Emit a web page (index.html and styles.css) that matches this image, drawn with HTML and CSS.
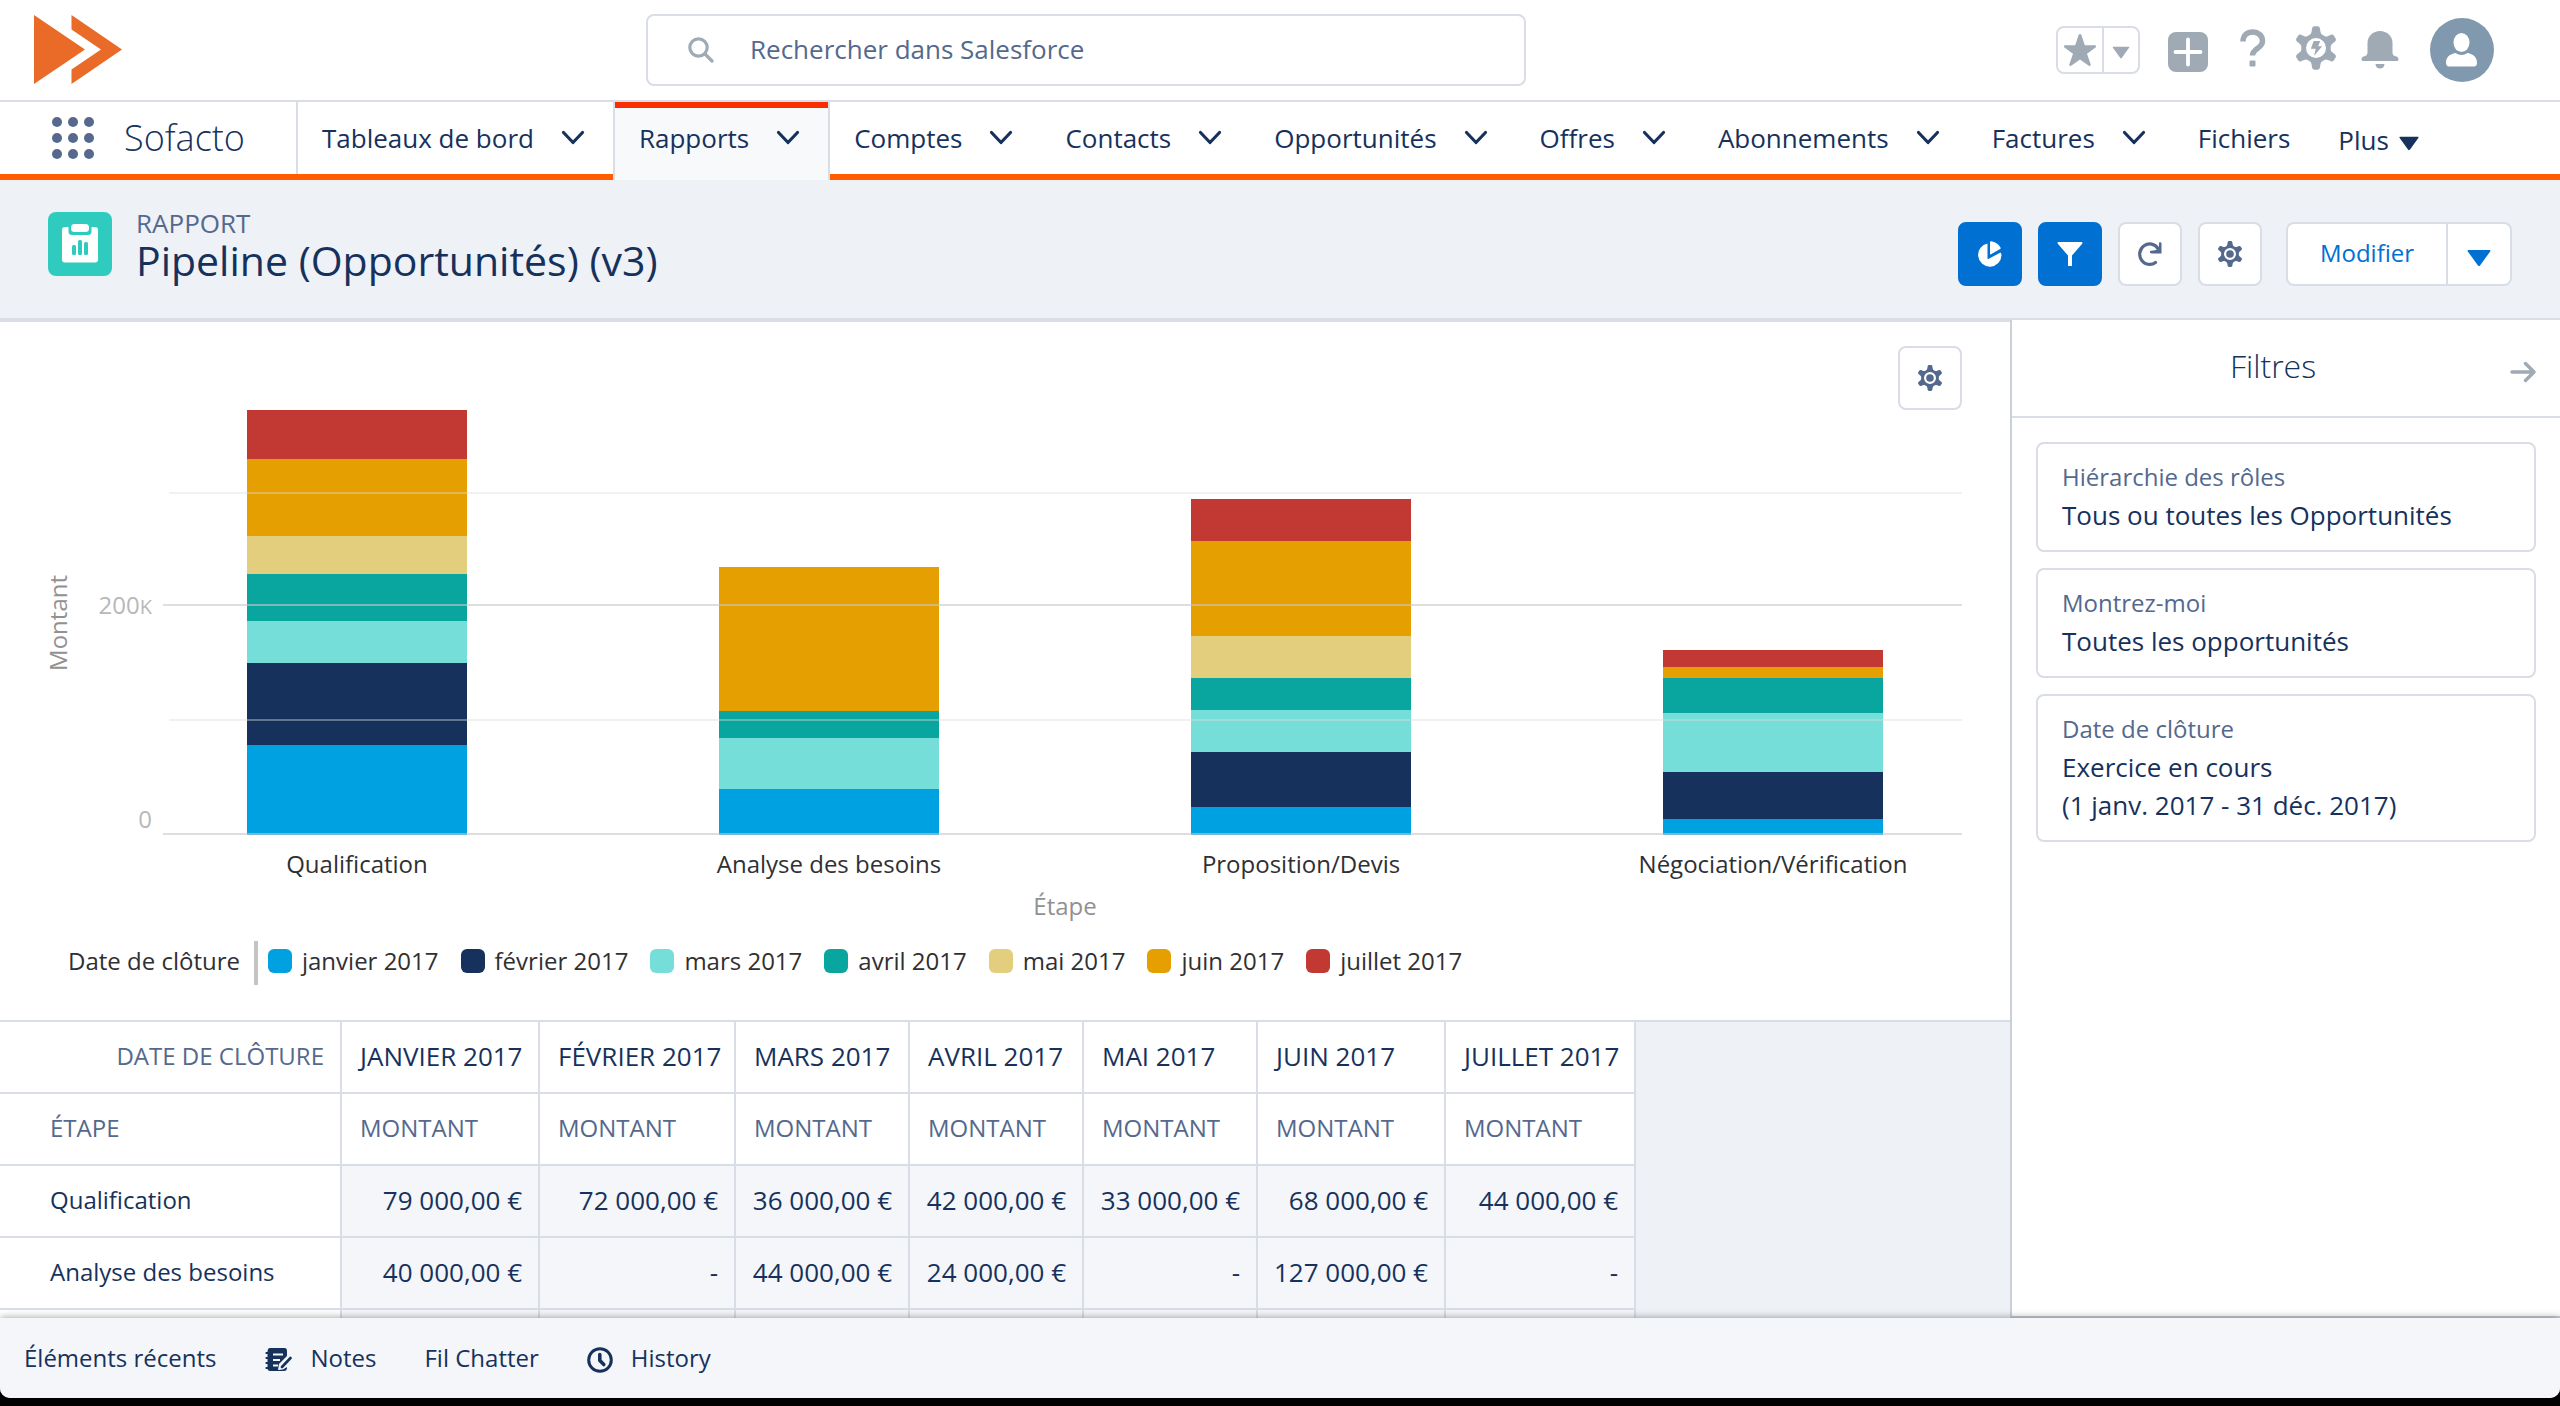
FILE: index.html
```html
<!DOCTYPE html>
<html lang="fr">
<head>
<meta charset="utf-8">
<title>Pipeline (Opportunités) (v3)</title>
<link rel="stylesheet" href="styles.css">
</head>
<body>
<svg class="sprite" aria-hidden="true">
  <symbol id="chevron" viewBox="0 0 24 16"><path d="M2.500 2.500L12 12.500L21.500 2.500" fill="none" stroke="currentColor" stroke-width="3.200" stroke-linecap="round" stroke-linejoin="round"/></symbol>
  <symbol id="caret" viewBox="0 0 24 18"><path d="M1.500 1h21c1 0 1.200.8.700 1.500L13 16.500c-.6.700-1.400.7-2 0L.8 2.500C.3 1.800.5 1 1.500 1z" fill="currentColor"/></symbol>
  <symbol id="gear" viewBox="0 0 24 26"><g fill="currentColor"><circle cx="12" cy="13" r="8.800"/><g id="teeth"><path id="tooth" d="M8 5.500q1.200-.8 1.400-2.500l.2-1.600Q9.800 0 11 0h2q1.200 0 1.400 1.400l.2 1.600q.2 1.700 1.400 2.500z"/><use href="#tooth" transform="rotate(60 12 13)"/><use href="#tooth" transform="rotate(120 12 13)"/><use href="#tooth" transform="rotate(180 12 13)"/><use href="#tooth" transform="rotate(240 12 13)"/><use href="#tooth" transform="rotate(300 12 13)"/></g></g><circle cx="12" cy="13" r="4.900" fill="none" stroke="#fff" stroke-width="2.200"/></symbol>
</svg>

<div class="app">
  <header class="topbar">
    <a class="logo" href="#" aria-label="Accueil">
      <svg width="90" height="70" viewBox="0 0 90 70"><path d="M0 0L51 34.500L0 69zM37.500 0L88 34.500L37.500 69V54.500L67 34.500L37.500 14.500z" fill="#ea6a28"/></svg>
    </a>
    <label class="search">
      <svg width="26" height="26" viewBox="0 0 26 26" fill="none" stroke="#9faab5" stroke-width="3.200" stroke-linecap="round"><circle cx="10.500" cy="10.500" r="8.700"/><path d="M17 17l7 7"/></svg>
      <input type="search" placeholder="Rechercher dans Salesforce" aria-label="Rechercher dans Salesforce">
    </label>
    <div class="tools">
      <div class="favorites">
        <button class="fav-star" aria-label="Favoris"><svg width="32" height="32" viewBox="0 0 32 32" fill="currentColor"><path d="M14.600 1q1.400-2 2.800 0l3.400 10.300H31q1.800.6.500 2.300L23 19.800l3.800 10.900q-.5 1.800-2.300.9L16 25.400l-8.500 6.200q-1.800.9-2.300-.9L9 19.800.5 13.600Q-.8 11.900 1 11.300h10.200z"/></svg></button>
        <button class="fav-menu" aria-label="Liste des favoris"><svg width="18" height="13"><use href="#caret"/></svg></button>
      </div>
      <button class="tool tool-add" aria-label="Créer"><svg width="40" height="40" viewBox="0 0 40 40"><rect width="40" height="40" rx="8" fill="currentColor"/><path d="M20 7.500v25M7.500 20h25" stroke="#fff" stroke-width="3.800" stroke-linecap="round"/></svg></button>
      <button class="tool tool-help" aria-label="Aide"><svg width="26" height="38" viewBox="0 0 26 38"><path d="M3 12.500C3 6.500 7 3 12.700 3S22.500 7 22.500 12c0 7.500-10 7.500-10 14.500" fill="none" stroke="currentColor" stroke-width="5.500"/><rect x="9.500" y="31.500" width="6" height="6" rx="1" fill="currentColor"/></svg></button>
      <button class="tool tool-setup" aria-label="Configuration"><svg width="40" height="44" viewBox="0 0 24 26"><g fill="currentColor"><circle cx="12" cy="13" r="8.800"/><use href="#teeth"/></g><circle cx="12" cy="13" r="6" fill="#fff"/><path d="M10.600 8.800h3.900l-1.200 3.200h2.400l-4.800 5.600.9-4.100H8.900z" fill="currentColor"/></svg></button>
      <button class="tool tool-bell" aria-label="Notifications"><svg width="38" height="38" viewBox="0 0 38 38" fill="currentColor"><path d="M19 0c-7 0-12.500 5-12.500 12v9c0 3-1 3.800-4 4.500C0 26.200 0 30 2 30h34c2 0 2-3.800-.5-4.500-3-.7-4-1.500-4-4.500v-9C31.500 5 26 0 19 0zM14.500 33h9c0 6-9 6-9 0z"/></svg></button>
      <button class="avatar" aria-label="Profil"><svg width="34" height="34" viewBox="0 0 34 34" fill="#fff"><ellipse cx="16.500" cy="9.500" rx="8" ry="9.500"/><path d="M1 29.500c0-7 6.500-9 9.500-9.500 4 2.500 8 2.500 12 0 3 .5 9.500 2.500 9.500 9.500 0 2.500-1 4-3 4H4c-2 0-3-1.500-3-4z"/></svg></button>
    </div>
  </header>

  <nav class="navbar">
    <div class="brand">
      <button class="launcher" aria-label="Lanceur d'applications"><svg width="42" height="42" viewBox="0 0 42 42" fill="#54698d"><circle cx="5" cy="5" r="5"/><circle cx="21" cy="5" r="5"/><circle cx="37" cy="5" r="5"/><circle cx="5" cy="21" r="5"/><circle cx="21" cy="21" r="5"/><circle cx="37" cy="21" r="5"/><circle cx="5" cy="37" r="5"/><circle cx="21" cy="37" r="5"/><circle cx="37" cy="37" r="5"/></svg></button>
      <span class="app-name">Sofacto</span>
    </div>
    <ul class="tabs">
      <li class="tab"><a href="#">Tableaux de bord</a><button aria-label="Menu Tableaux de bord"><svg width="24" height="16"><use href="#chevron"/></svg></button></li>
      <li class="tab tab-active"><a href="#">Rapports</a><button aria-label="Menu Rapports"><svg width="24" height="16"><use href="#chevron"/></svg></button></li>
      <li class="tab"><a href="#">Comptes</a><button aria-label="Menu Comptes"><svg width="24" height="16"><use href="#chevron"/></svg></button></li>
      <li class="tab"><a href="#">Contacts</a><button aria-label="Menu Contacts"><svg width="24" height="16"><use href="#chevron"/></svg></button></li>
      <li class="tab"><a href="#">Opportunités</a><button aria-label="Menu Opportunités"><svg width="24" height="16"><use href="#chevron"/></svg></button></li>
      <li class="tab"><a href="#">Offres</a><button aria-label="Menu Offres"><svg width="24" height="16"><use href="#chevron"/></svg></button></li>
      <li class="tab"><a href="#">Abonnements</a><button aria-label="Menu Abonnements"><svg width="24" height="16"><use href="#chevron"/></svg></button></li>
      <li class="tab"><a href="#">Factures</a><button aria-label="Menu Factures"><svg width="24" height="16"><use href="#chevron"/></svg></button></li>
      <li class="tab"><a href="#">Fichiers</a></li>
      <li class="tab"><button class="more">Plus <svg width="20" height="15"><use href="#caret"/></svg></button></li>
    </ul>
  </nav>

  <header class="page-header">
    <div class="page-icon"><svg width="36" height="40" viewBox="0 0 36 40"><rect x="9" y="0" width="18" height="8" rx="3.500" fill="#fff"/><path d="M3 3h3.500v4.500a3.500 3.500 0 0 0 3.500 3.500h16a3.500 3.500 0 0 0 3.500-3.500V3H33a3 3 0 0 1 3 3v29.500a3 3 0 0 1-3 3H3a3 3 0 0 1-3-3V6a3 3 0 0 1 3-3z" fill="#fff"/><g fill="#2fcbbf"><rect x="10" y="21" width="4" height="10" rx="1.500"/><rect x="16" y="16" width="4" height="15" rx="1.500"/><rect x="22" y="18" width="4" height="13" rx="1.500"/></g></svg></div>
    <div class="page-heading">
      <p>RAPPORT</p>
      <h1>Pipeline (Opportunités) (v3)</h1>
    </div>
    <div class="actions">
      <button class="icon-button icon-button-brand" aria-label="Graphique"><svg width="24" height="26" viewBox="0 0 24 26" fill="#fff"><path d="M9.500 2.500V17q0 1.500 1.300.8L22.500 11.500q1 .8 1 3A11.700 11.700 0 1 1 9.500 2.500z"/><path d="M12 1.200q0-1.200 1.200-1 6 .8 9.300 6.300.6 1-.4 1.600L13 13.300q-1 .4-1-.6z"/></svg></button>
      <button class="icon-button icon-button-brand" aria-label="Filtres"><svg width="26" height="26" viewBox="0 0 26 26" fill="#fff"><path d="M1.500 1h23c1 0 1.300.9.700 1.700L15 14.500V25h-4V14.500L.8 2.700C.2 1.900.5 1 1.500 1z"/></svg></button>
      <button class="icon-button" aria-label="Actualiser"><svg width="26" height="26" viewBox="0 0 26 26"><path d="M18.500 21.500A10 10.200 0 1 1 21 7.500" fill="none" stroke="currentColor" stroke-width="3.200" stroke-linecap="round"/><path d="M22 1.500q2.500-.8 2.500 1V12.500H14.500q-2-.3-1.700-2.500 5.500-.5 9.200-2z" fill="currentColor"/></svg></button>
      <button class="icon-button" aria-label="Options"><svg width="24" height="26"><use href="#gear"/></svg></button>
      <div class="split">
        <button class="split-main">Modifier</button>
        <button class="split-menu" aria-label="Autres actions"><svg width="24" height="18"><use href="#caret"/></svg></button>
      </div>
    </div>
  </header>

  <main class="workspace">
    <section class="report">
      <div class="chart">
        <div class="chart-tools"><button class="icon-button" aria-label="Propriétés du graphique"><svg width="24" height="26"><use href="#gear"/></svg></button></div>
        <div class="chart-grid">
          <div class="y-title">Montant</div>
          <div class="y-ticks"><span>200<small>K</small></span><span>0</span></div>
          <div class="plot">
            <div class="bars">
              <div class="bar"><i class="m7" style="height:49px"></i><i class="m6" style="height:77px"></i><i class="m5" style="height:38px"></i><i class="m4" style="height:47px"></i><i class="m3" style="height:42px"></i><i class="m2" style="height:82px"></i><i class="m1" style="height:90px"></i></div>
              <div class="bar"><i class="m6" style="height:144px"></i><i class="m4" style="height:27px"></i><i class="m3" style="height:51px"></i><i class="m1" style="height:46px"></i></div>
              <div class="bar"><i class="m7" style="height:42px"></i><i class="m6" style="height:95px"></i><i class="m5" style="height:42px"></i><i class="m4" style="height:32px"></i><i class="m3" style="height:42px"></i><i class="m2" style="height:55px"></i><i class="m1" style="height:28px"></i></div>
              <div class="bar"><i class="m7" style="height:17px"></i><i class="m6" style="height:11px"></i><i class="m4" style="height:35px"></i><i class="m3" style="height:59px"></i><i class="m2" style="height:47px"></i><i class="m1" style="height:16px"></i></div>
            </div>
            <div class="line line-minor" style="bottom:341px"></div>
            <div class="line" style="bottom:229px"></div>
            <div class="line line-minor" style="bottom:114px"></div>
            <div class="line" style="bottom:0"></div>
          </div>
          <div class="x-labels"><span>Qualification</span><span>Analyse des besoins</span><span>Proposition/Devis</span><span>Négociation/Vérification</span></div>
          <div class="x-title">Étape</div>
        </div>
        <div class="legend">
          <span class="legend-title">Date de clôture</span>
          <ul>
            <li><i class="m1"></i>janvier 2017</li>
            <li><i class="m2"></i>février 2017</li>
            <li><i class="m3"></i>mars 2017</li>
            <li><i class="m4"></i>avril 2017</li>
            <li><i class="m5"></i>mai 2017</li>
            <li><i class="m6"></i>juin 2017</li>
            <li><i class="m7"></i>juillet 2017</li>
          </ul>
        </div>
      </div>
      <div class="table-area">
        <table>
          <colgroup><col class="c-label"><col class="c-198"><col class="c-196"><col class="c-174"><col class="c-174"><col class="c-174"><col class="c-188"><col class="c-190"></colgroup>
          <thead>
            <tr class="months"><th class="group">DATE DE CLÔTURE</th><th>JANVIER 2017</th><th>FÉVRIER 2017</th><th>MARS 2017</th><th>AVRIL 2017</th><th>MAI 2017</th><th>JUIN 2017</th><th>JUILLET 2017</th></tr>
            <tr class="sub"><th>ÉTAPE</th><th>MONTANT</th><th>MONTANT</th><th>MONTANT</th><th>MONTANT</th><th>MONTANT</th><th>MONTANT</th><th>MONTANT</th></tr>
          </thead>
          <tbody>
            <tr><th scope="row">Qualification</th><td>79 000,00 €</td><td>72 000,00 €</td><td>36 000,00 €</td><td>42 000,00 €</td><td>33 000,00 €</td><td>68 000,00 €</td><td>44 000,00 €</td></tr>
            <tr><th scope="row">Analyse des besoins</th><td>40 000,00 €</td><td>-</td><td>44 000,00 €</td><td>24 000,00 €</td><td>-</td><td>127 000,00 €</td><td>-</td></tr>
            <tr><th scope="row"></th><td></td><td></td><td></td><td></td><td></td><td></td><td></td></tr>
          </tbody>
        </table>
      </div>
    </section>

    <aside class="filters">
      <header>
        <h2>Filtres</h2>
        <button aria-label="Masquer les filtres"><svg width="26" height="22" viewBox="0 0 26 22" fill="none" stroke="#9faab5" stroke-width="3.400" stroke-linecap="round" stroke-linejoin="round"><path d="M2 11h21M15.500 2.500L24 11l-8.500 8.500"/></svg></button>
      </header>
      <div class="filter-list">
        <button class="filter"><span>Hiérarchie des rôles</span>Tous ou toutes les Opportunités</button>
        <button class="filter"><span>Montrez-moi</span>Toutes les opportunités</button>
        <button class="filter"><span>Date de clôture</span>Exercice en cours<br>(1 janv. 2017 - 31 déc. 2017)</button>
      </div>
    </aside>
  </main>

  <footer class="utility">
    <button>Éléments récents</button>
    <button><svg width="28" height="26" viewBox="0 0 28 26"><path d="M6 1h14.500Q23 1 23 4v5l-8 8-1 6 5-.5 4-2.500v1q0 3-3 3H6q-2 0-2.500-2H2q-1.500-1 0-2h1.500v-3H2q-1.500-1 0-2h1.500v-3H2q-1.500-1 0-2h1.500V7H2Q.5 6 2 5h1.500Q3.500 1 6 1z" fill="currentColor"/><path d="M9 7.500h10M9 13h7M9 18.500h5" stroke="#f4f6f9" stroke-width="2.200"/><path d="M18 20l8.500-9" stroke="currentColor" stroke-width="2.600" stroke-linecap="round"/></svg>Notes</button>
    <button>Fil Chatter</button>
    <button><svg width="26" height="26" viewBox="0 0 26 26" fill="none" stroke="currentColor" stroke-width="3" stroke-linecap="round" stroke-linejoin="round"><circle cx="13" cy="13" r="11.300"/><path d="M12.800 7.500v6l4 4" stroke-width="3.600"/></svg>History</button>
  </footer>
</div>
</body>
</html>
```
FILE: styles.css
```css
:root {
  --ink: #16325c;
  --muted: #54698d;
  --line: #d8dde6;
  --grey: #9faab5;
  --brand: #0070d2;
  --page: #eef1f6;
  --soft: #f4f6f9;
}

* { box-sizing: border-box; }

body {
  margin: 0;
  padding-bottom: 8px;
  background: #000;
  color: var(--ink);
  font: 26px/38px "Open Sans", "Noto Sans", sans-serif;
}

button, input {
  margin: 0;
  padding: 0;
  border: 0;
  background: none;
  color: inherit;
  font: inherit;
}

svg { display: block; flex: none; }
a { color: inherit; text-decoration: none; }
ul { margin: 0; padding: 0; list-style: none; }
h1, h2, p { margin: 0; font-weight: 400; }
.sprite { position: absolute; width: 0; height: 0; }

.app {
  display: flex;
  flex-direction: column;
  height: calc(100vh - 8px);
  overflow: hidden;
  border-radius: 0 0 10px 10px;
  background: #fff;
}

/* Top bar */
.topbar {
  display: grid;
  grid-template-columns: 612px minmax(0, 880px) 1fr;
  align-items: center;
  padding: 14px 66px 14px 34px;
  border-bottom: 2px solid var(--line);
}

.search {
  display: flex;
  align-items: center;
  gap: 36px;
  height: 72px;
  padding: 0 40px;
  border: 2px solid var(--line);
  border-radius: 8px;
}

.search input { flex: 1; min-width: 0; padding-bottom: 3px; outline: none; }
.search input::placeholder { color: var(--muted); opacity: 1; }

.tools {
  display: flex;
  align-items: center;
  justify-content: flex-end;
  color: var(--grey);
}

.favorites {
  display: flex;
  height: 48px;
  border: 2px solid var(--line);
  border-radius: 8px;
}

.favorites button { display: flex; align-items: center; justify-content: center; }
.fav-star { width: 46px; border-right: 2px solid var(--line); }
.favorites .fav-menu { width: 34px; padding-top: 4px; }
.tool { margin-left: 28px; }
.tool-add { padding-top: 4px; }
.tool-help { margin-left: 32px; padding-bottom: 4px; }
.tool-setup { margin-left: 30px; padding-bottom: 4px; }
.tool-bell { margin-left: 25px; }

.avatar {
  display: flex;
  align-items: center;
  justify-content: center;
  width: 64px;
  height: 64px;
  margin: -8px 0 -8px 31px;
  border-radius: 50%;
  background: #8199af;
}

/* Navigation */
.navbar {
  display: flex;
  height: 78px;
  border-bottom: 6px solid #ff5d00;
}

.brand {
  display: flex;
  align-items: center;
  gap: 30px;
  width: 298px;
  padding-left: 52px;
  border-right: 2px solid var(--line);
}

.app-name { font-size: 36px; font-weight: 300; }
.tabs { display: flex; white-space: nowrap; }

.tab {
  display: flex;
  align-items: center;
  gap: 27px;
  padding: 0 24px;
}

.tab > button:not(.more) { padding-right: 4px; }

.tab-active {
  margin-bottom: -6px;
  padding-bottom: 6px;
  border: solid var(--line);
  border-width: 0 2px;
  background: #f7f9fb;
  box-shadow: inset 0 6px #fa2d00;
}

.more { display: flex; align-items: center; gap: 10px; padding-top: 4px; }
.more svg { margin-top: 6px; }

/* Page header */
.page-header {
  display: flex;
  align-items: center;
  gap: 24px;
  height: 140px;
  padding: 0 48px;
  border-bottom: 2px solid var(--line);
  background: var(--page);
}

.page-icon {
  display: flex;
  align-items: center;
  justify-content: center;
  width: 64px;
  height: 64px;
  margin-bottom: 10px;
  border-radius: 8px;
  background: #2fcbbf;
}

.page-heading { margin-bottom: 6px; }
.page-heading p { color: var(--muted); line-height: 28px; }
.page-heading h1 { font-size: 41px; line-height: 46px; }

.actions { display: flex; gap: 16px; margin: 10px 0 0 auto; }

.icon-button {
  display: flex;
  align-items: center;
  justify-content: center;
  width: 64px;
  height: 64px;
  border: 2px solid var(--line);
  border-radius: 8px;
  background: #fff;
  color: var(--muted);
}

.icon-button-brand { border-color: var(--brand); background: var(--brand); }

.split {
  display: flex;
  height: 64px;
  margin-left: 8px;
  border: 2px solid var(--line);
  border-radius: 8px;
  background: #fff;
  color: var(--brand);
}

.split-main { width: 160px; padding-bottom: 2px; font-size: 24px; border-right: 2px solid var(--line); }
.split-menu { display: flex; align-items: center; justify-content: center; width: 62px; padding-top: 8px; }

/* Workspace */
.workspace { display: flex; flex: 1; min-height: 0; }

.report {
  display: flex;
  flex: 1;
  flex-direction: column;
  min-width: 0;
  overflow: hidden;
  border-top: 2px solid var(--line);
}

.chart {
  padding: 24px 48px 35px;
  color: #2f3033;
  font-size: 24px;
  line-height: 32px;
}

.chart-tools { display: flex; justify-content: flex-end; }

.chart-grid {
  display: grid;
  grid-template-columns: 24px 80px 1fr;
  grid-template-rows: 425px auto auto;
}

.y-title {
  align-self: center;
  justify-self: start;
  color: #919191;
  line-height: 20px;
  writing-mode: vertical-rl;
  transform: rotate(180deg);
}

.y-ticks {
  display: flex;
  flex-direction: column;
  align-items: flex-end;
  justify-content: flex-end;
  gap: 180px;
  color: #b8b8b8;
}

.y-ticks small { font-size: 20px; }

.plot { position: relative; margin-left: 11px; }

.bars, .x-labels {
  display: flex;
  justify-content: space-between;
  height: 100%;
  padding: 0 79px 0 84px;
}

.bars { align-items: flex-end; }
.bar { width: 220px; }
.bar i { display: block; }

.line {
  position: absolute;
  right: 0;
  left: 0;
  height: 2px;
  background: rgba(200, 200, 200, 0.6);
}

.line-minor { left: 6px; background: rgba(220, 220, 220, 0.4); }

.x-labels { grid-column: 3; height: auto; margin: 13px 0 0 11px; }
.x-labels span { display: flex; justify-content: center; width: 220px; white-space: nowrap; }
.x-title { grid-column: 3; margin: 10px 0 0 16px; color: #919191; text-align: center; }

.legend { display: flex; align-items: center; height: 44px; margin-top: 19px; padding-left: 20px; }
.legend-title { padding: 0 14px 4px 0; }

.legend ul {
  display: flex;
  align-items: center;
  gap: 22px;
  height: 44px;
  padding-left: 10px;
  border-left: 4px solid #c4c4c4;
}

.legend li { display: flex; align-items: center; gap: 10px; padding-bottom: 4px; white-space: nowrap; }
.legend i { width: 24px; height: 24px; border-radius: 6px; }

.m1 { background: #00a1e0; }
.m2 { background: #16325c; }
.m3 { background: #76ded9; }
.m4 { background: #08a69e; }
.m5 { background: #e2ce7d; }
.m6 { background: #e69f00; }
.m7 { background: #c23934; }

/* Data table */
.table-area {
  flex: 1;
  min-height: 0;
  overflow: hidden;
  border-top: 2px solid var(--line);
  background: var(--page);
}

table {
  width: 1636px;
  border-collapse: separate;
  border-spacing: 0;
  table-layout: fixed;
  background: #fff;
}

.c-label { width: 342px; }
.c-198 { width: 198px; }
.c-196 { width: 196px; }
.c-174 { width: 174px; }
.c-188 { width: 188px; }
.c-190 { width: 190px; }

th, td {
  height: 72px;
  padding: 0 16px 2px 18px;
  border: solid var(--line);
  border-width: 0 2px 2px 0;
  font-weight: 400;
  text-align: left;
  white-space: nowrap;
}

th { font-size: 24px; }
.months th:not(.group) { padding-right: 0; font-size: 26px; }
th:first-child { padding-left: 50px; }
.months .group { color: var(--muted); text-align: right; }
.sub th { color: var(--muted); }
td { padding-left: 0; background: var(--soft); text-align: right; }

/* Filter panel */
.filters {
  width: 550px;
  border: solid #c9d0da;
  border-width: 0 0 2px 2px;
}

.filters header {
  display: flex;
  align-items: center;
  height: 98px;
  padding: 0 24px;
  border-bottom: 2px solid var(--line);
}

.filters h2 { flex: 1; padding-bottom: 4px; font-size: 32px; font-weight: 300; text-align: center; }
.filters header button { padding-top: 8px; }

.filter-list {
  display: flex;
  flex-direction: column;
  gap: 16px;
  padding: 24px;
}

.filter {
  padding: 14px 24px 16px;
  border: 2px solid var(--line);
  border-radius: 8px;
  text-align: left;
}

.filter span { display: block; color: var(--muted); font-size: 24px; }

/* Utility bar */
.utility {
  display: flex;
  align-items: center;
  gap: 48px;
  height: 80px;
  padding: 0 24px;
  background: var(--soft);
  box-shadow: 0 0 8px rgba(0, 0, 0, 0.4);
  font-size: 24px;
  z-index: 1;
}

.utility button { display: flex; align-items: center; gap: 18px; }
.utility svg { margin-top: 4px; }
```
